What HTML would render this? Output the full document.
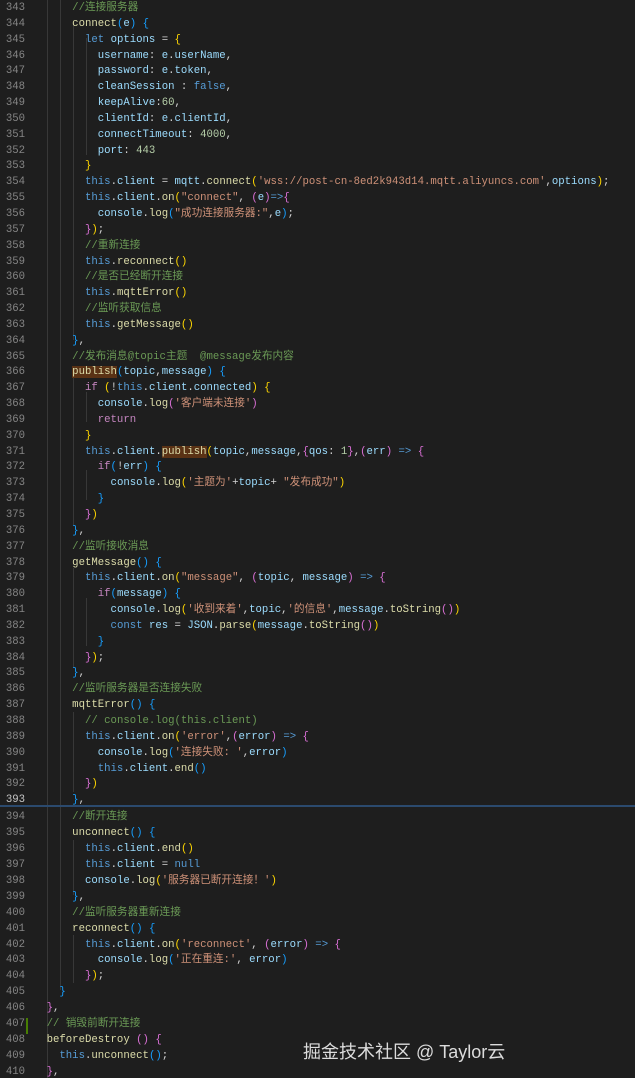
<!DOCTYPE html>
<html><head><meta charset="utf-8"><style>
html,body{margin:0;padding:0;background:#1e1e1e;width:635px;height:1078px;overflow:hidden;position:relative}
.pane{position:absolute;left:0;width:635px;font-family:"Liberation Mono","Noto Sans CJK SC",monospace;font-size:10.67px;color:#d4d4d4}
.l{position:relative;height:15.85px;line-height:15.85px;white-space:pre}
.b2 .l{height:15.94px;line-height:15.94px}
.n{position:absolute;left:0;width:25px;text-align:right;color:#858585}
.t{position:absolute;left:33.8px;white-space:pre}
.c{color:#6a9955}.k{color:#569cd6}.v{color:#9cdcfe}.f{color:#dcdcaa}.s{color:#ce9178}.m{color:#b5cea8}
.y{color:#ffd700}.p{color:#da70d6}.b{color:#179fff}.r{color:#c586c0}.g{color:#4ec9b0}
.h{background:#5a3215}
.gd{position:absolute;width:1px;background:#383838}
</style></head><body>
<div class="gd" style="left:47px;top:0;height:1078px"></div>
<div class="gd" style="left:60px;top:0;height:990px"></div>
<div class="gd" style="left:73px;top:22px;height:318px"></div>
<div class="gd" style="left:73px;top:375px;height:150px"></div>
<div class="gd" style="left:73px;top:568px;height:100px"></div>
<div class="gd" style="left:73px;top:712px;height:80px"></div>
<div class="gd" style="left:73px;top:840px;height:55px"></div>
<div class="gd" style="left:73px;top:935px;height:48px"></div>
<div class="gd" style="left:86px;top:38px;height:117px"></div>
<div class="gd" style="left:86px;top:392px;height:30px"></div>
<div class="gd" style="left:86px;top:470px;height:30px"></div>
<div class="gd" style="left:86px;top:598px;height:48px"></div>

<div class="pane" style="top:1px"><div class="l"><span class="n">343</span><span class="t">      <span class="c">//连接服务器</span></span></div><div class="l"><span class="n">344</span><span class="t">      <span class="f">connect</span><span class="b">(</span><span class="v">e</span><span class="b">)</span> <span class="b">{</span></span></div><div class="l"><span class="n">345</span><span class="t">        <span class="k">let</span> <span class="v">options</span> = <span class="y">{</span></span></div><div class="l"><span class="n">346</span><span class="t">          <span class="v">username</span>: <span class="v">e</span>.<span class="v">userName</span>,</span></div><div class="l"><span class="n">347</span><span class="t">          <span class="v">password</span>: <span class="v">e</span>.<span class="v">token</span>,</span></div><div class="l"><span class="n">348</span><span class="t">          <span class="v">cleanSession</span> : <span class="k">false</span>,</span></div><div class="l"><span class="n">349</span><span class="t">          <span class="v">keepAlive</span>:<span class="m">60</span>,</span></div><div class="l"><span class="n">350</span><span class="t">          <span class="v">clientId</span>: <span class="v">e</span>.<span class="v">clientId</span>,</span></div><div class="l"><span class="n">351</span><span class="t">          <span class="v">connectTimeout</span>: <span class="m">4000</span>,</span></div><div class="l"><span class="n">352</span><span class="t">          <span class="v">port</span>: <span class="m">443</span></span></div><div class="l"><span class="n">353</span><span class="t">        <span class="y">}</span></span></div><div class="l"><span class="n">354</span><span class="t">        <span class="k">this</span>.<span class="v">client</span> = <span class="v">mqtt</span>.<span class="f">connect</span><span class="y">(</span><span class="s">'wss://post-cn-8ed2k943d14.mqtt.aliyuncs.com'</span>,<span class="v">options</span><span class="y">)</span>;</span></div><div class="l"><span class="n">355</span><span class="t">        <span class="k">this</span>.<span class="v">client</span>.<span class="f">on</span><span class="y">(</span><span class="s">"connect"</span>, <span class="p">(</span><span class="v">e</span><span class="p">)</span><span class="k">=&gt;</span><span class="p">{</span></span></div><div class="l"><span class="n">356</span><span class="t">          <span class="v">console</span>.<span class="f">log</span><span class="b">(</span><span class="s">"成功连接服务器:"</span>,<span class="v">e</span><span class="b">)</span>;</span></div><div class="l"><span class="n">357</span><span class="t">        <span class="p">}</span><span class="y">)</span>;</span></div><div class="l"><span class="n">358</span><span class="t">        <span class="c">//重新连接</span></span></div><div class="l"><span class="n">359</span><span class="t">        <span class="k">this</span>.<span class="f">reconnect</span><span class="y">()</span></span></div><div class="l"><span class="n">360</span><span class="t">        <span class="c">//是否已经断开连接</span></span></div><div class="l"><span class="n">361</span><span class="t">        <span class="k">this</span>.<span class="f">mqttError</span><span class="y">()</span></span></div><div class="l"><span class="n">362</span><span class="t">        <span class="c">//监听获取信息</span></span></div><div class="l"><span class="n">363</span><span class="t">        <span class="k">this</span>.<span class="f">getMessage</span><span class="y">()</span></span></div><div class="l"><span class="n">364</span><span class="t">      <span class="b">}</span>,</span></div><div class="l"><span class="n">365</span><span class="t">      <span class="c">//发布消息@topic主题  @message发布内容</span></span></div><div class="l"><span class="n">366</span><span class="t">      <span class="f h">publish</span><span class="b">(</span><span class="v">topic</span>,<span class="v">message</span><span class="b">)</span> <span class="b">{</span></span></div><div class="l"><span class="n">367</span><span class="t">        <span class="r">if</span> <span class="y">(</span>!<span class="k">this</span>.<span class="v">client</span>.<span class="v">connected</span><span class="y">)</span> <span class="y">{</span></span></div><div class="l"><span class="n">368</span><span class="t">          <span class="v">console</span>.<span class="f">log</span><span class="p">(</span><span class="s">'客户端未连接'</span><span class="p">)</span></span></div><div class="l"><span class="n">369</span><span class="t">          <span class="r">return</span></span></div><div class="l"><span class="n">370</span><span class="t">        <span class="y">}</span></span></div><div class="l"><span class="n">371</span><span class="t">        <span class="k">this</span>.<span class="v">client</span>.<span class="f h">publish</span><span class="y">(</span><span class="v">topic</span>,<span class="v">message</span>,<span class="p">{</span><span class="v">qos</span>: <span class="m">1</span><span class="p">}</span>,<span class="p">(</span><span class="v">err</span><span class="p">)</span> <span class="k">=&gt;</span> <span class="p">{</span></span></div><div class="l"><span class="n">372</span><span class="t">          <span class="r">if</span><span class="b">(</span>!<span class="v">err</span><span class="b">)</span> <span class="b">{</span></span></div><div class="l"><span class="n">373</span><span class="t">            <span class="v">console</span>.<span class="f">log</span><span class="y">(</span><span class="s">'主题为'</span>+<span class="v">topic</span>+ <span class="s">"发布成功"</span><span class="y">)</span></span></div><div class="l"><span class="n">374</span><span class="t">          <span class="b">}</span></span></div><div class="l"><span class="n">375</span><span class="t">        <span class="p">}</span><span class="y">)</span></span></div><div class="l"><span class="n">376</span><span class="t">      <span class="b">}</span>,</span></div><div class="l"><span class="n">377</span><span class="t">      <span class="c">//监听接收消息</span></span></div><div class="l"><span class="n">378</span><span class="t">      <span class="f">getMessage</span><span class="b">()</span> <span class="b">{</span></span></div><div class="l"><span class="n">379</span><span class="t">        <span class="k">this</span>.<span class="v">client</span>.<span class="f">on</span><span class="y">(</span><span class="s">"message"</span>, <span class="p">(</span><span class="v">topic</span>, <span class="v">message</span><span class="p">)</span> <span class="k">=&gt;</span> <span class="p">{</span></span></div><div class="l"><span class="n">380</span><span class="t">          <span class="r">if</span><span class="b">(</span><span class="v">message</span><span class="b">)</span> <span class="b">{</span></span></div><div class="l"><span class="n">381</span><span class="t">            <span class="v">console</span>.<span class="f">log</span><span class="y">(</span><span class="s">'收到来着'</span>,<span class="v">topic</span>,<span class="s">'的信息'</span>,<span class="v">message</span>.<span class="f">toString</span><span class="p">()</span><span class="y">)</span></span></div><div class="l"><span class="n">382</span><span class="t">            <span class="k">const</span> <span class="v">res</span> = <span class="v">JSON</span>.<span class="f">parse</span><span class="y">(</span><span class="v">message</span>.<span class="f">toString</span><span class="p">()</span><span class="y">)</span></span></div><div class="l"><span class="n">383</span><span class="t">          <span class="b">}</span></span></div><div class="l"><span class="n">384</span><span class="t">        <span class="p">}</span><span class="y">)</span>;</span></div><div class="l"><span class="n">385</span><span class="t">      <span class="b">}</span>,</span></div><div class="l"><span class="n">386</span><span class="t">      <span class="c">//监听服务器是否连接失败</span></span></div><div class="l"><span class="n">387</span><span class="t">      <span class="f">mqttError</span><span class="b">()</span> <span class="b">{</span></span></div><div class="l"><span class="n">388</span><span class="t">        <span class="c">// console.log(this.client)</span></span></div><div class="l"><span class="n">389</span><span class="t">        <span class="k">this</span>.<span class="v">client</span>.<span class="f">on</span><span class="y">(</span><span class="s">'error'</span>,<span class="p">(</span><span class="v">error</span><span class="p">)</span> <span class="k">=&gt;</span> <span class="p">{</span></span></div><div class="l"><span class="n">390</span><span class="t">          <span class="v">console</span>.<span class="f">log</span><span class="b">(</span><span class="s">'连接失败: '</span>,<span class="v">error</span><span class="b">)</span></span></div><div class="l"><span class="n">391</span><span class="t">          <span class="k">this</span>.<span class="v">client</span>.<span class="f">end</span><span class="b">()</span></span></div><div class="l"><span class="n">392</span><span class="t">        <span class="p">}</span><span class="y">)</span></span></div><div class="l"><span class="n" style="color:#c6c6c6">393</span><span class="t">      <span class="b">}</span>,</span></div></div>

<div style="position:absolute;left:0;top:805px;width:635px;height:2px;background:#2b4a6e"></div>

<div class="pane b2" style="top:810px"><div class="l"><span class="n">394</span><span class="t">      <span class="c">//断开连接</span></span></div><div class="l"><span class="n">395</span><span class="t">      <span class="f">unconnect</span><span class="b">()</span> <span class="b">{</span></span></div><div class="l"><span class="n">396</span><span class="t">        <span class="k">this</span>.<span class="v">client</span>.<span class="f">end</span><span class="y">()</span></span></div><div class="l"><span class="n">397</span><span class="t">        <span class="k">this</span>.<span class="v">client</span> = <span class="k">null</span></span></div><div class="l"><span class="n">398</span><span class="t">        <span class="v">console</span>.<span class="f">log</span><span class="y">(</span><span class="s">'服务器已断开连接！'</span><span class="y">)</span></span></div><div class="l"><span class="n">399</span><span class="t">      <span class="b">}</span>,</span></div><div class="l"><span class="n">400</span><span class="t">      <span class="c">//监听服务器重新连接</span></span></div><div class="l"><span class="n">401</span><span class="t">      <span class="f">reconnect</span><span class="b">()</span> <span class="b">{</span></span></div><div class="l"><span class="n">402</span><span class="t">        <span class="k">this</span>.<span class="v">client</span>.<span class="f">on</span><span class="y">(</span><span class="s">'reconnect'</span>, <span class="p">(</span><span class="v">error</span><span class="p">)</span> <span class="k">=&gt;</span> <span class="p">{</span></span></div><div class="l"><span class="n">403</span><span class="t">          <span class="v">console</span>.<span class="f">log</span><span class="b">(</span><span class="s">'正在重连:'</span>, <span class="v">error</span><span class="b">)</span></span></div><div class="l"><span class="n">404</span><span class="t">        <span class="p">}</span><span class="y">)</span>;</span></div><div class="l"><span class="n">405</span><span class="t">    <span class="b">}</span></span></div><div class="l"><span class="n">406</span><span class="t">  <span class="p">}</span>,</span></div><div class="l"><span class="n">407</span><span class="t">  <span class="c">// 销毁前断开连接</span></span></div><div class="l"><span class="n">408</span><span class="t">  <span class="f">beforeDestroy</span> <span class="p">()</span> <span class="p">{</span></span></div><div class="l"><span class="n">409</span><span class="t">    <span class="k">this</span>.<span class="f">unconnect</span><span class="b">()</span>;</span></div><div class="l"><span class="n">410</span><span class="t">  <span class="p">}</span>,</span></div></div>
<div style="position:absolute;left:26px;top:1018px;width:2px;height:16px;background:#487e02"></div>
<div style="position:absolute;left:303px;top:1040px;font-family:'Liberation Sans','Noto Sans CJK SC',sans-serif;font-size:18px;line-height:24px;color:#dcdcdc;white-space:nowrap">掘金技术社区 @ Taylor云</div>
</body></html>
